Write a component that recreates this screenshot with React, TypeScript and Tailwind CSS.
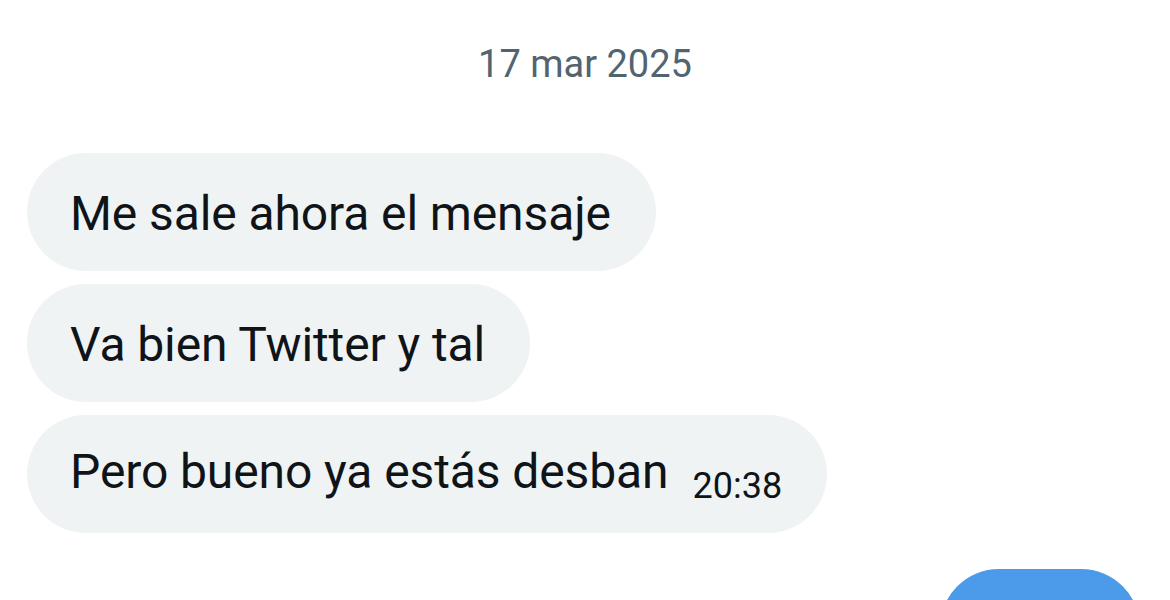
const bubbles = [
  { text: "Me sale ahora el mensaje" },
  { text: "Va bien Twitter y tal" },
  { text: "Pero bueno ya estás desban", time: "20:38" },
];

export default function App() {
  return (
    <div className="h-[600px] w-[1170px] overflow-hidden bg-white font-['Roboto',sans-serif]">
      <div className="flex h-[153px] items-start justify-center pt-[40px]">
        <span className="text-[38px] leading-[48px] text-[#536471]">17 mar 2025</span>
      </div>
      <div className="flex flex-col items-start gap-[13px] pl-[27px]">
        {bubbles.map((b) => (
          <div
            key={b.text}
            className="flex h-[118px] items-center rounded-full bg-[#eff3f4] pl-[43px] pr-[45px] text-[#0f1419]"
          >
            <p className="mt-[3px] whitespace-nowrap text-[48px] leading-none tracking-[-0.1px]">
              {b.text}
              {b.time ? (
                <span className="ml-[24px] align-[-10px] text-[36px] tracking-normal">{b.time}</span>
              ) : null}
            </p>
          </div>
        ))}
      </div>
      <div className="flex justify-end pr-[30px] pt-[36px]">
        <div className="h-[118px] w-[200px] rounded-full bg-[#4c9aea]" />
      </div>
    </div>
  );
}
